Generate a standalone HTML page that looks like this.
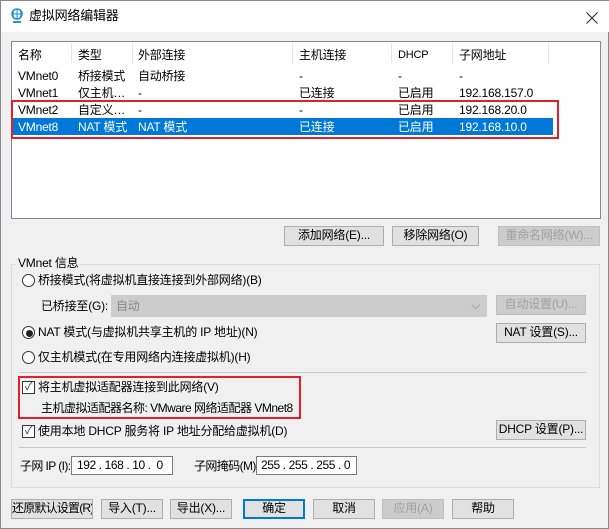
<!DOCTYPE html><html><head><meta charset="utf-8"><style>
*{margin:0;padding:0;box-sizing:border-box}
body{width:609px;height:529px;background:#f0f0f0;font-family:"Liberation Sans","Noto Sans CJK SC",sans-serif;font-size:12px;color:#000;position:relative;overflow:hidden;border:1px solid #888;letter-spacing:-0.2px}
.a{position:absolute;white-space:nowrap;line-height:16px}
.btn{position:absolute;background:#e1e1e1;border:1px solid #adadad;text-align:center;line-height:17px;height:20px;white-space:nowrap;overflow:hidden}
.dis{color:#a0a0a0;background:#ccc;border-color:#bfbfbf}
.rad{position:absolute;width:13px;height:13px;border:1px solid #333;border-radius:50%;background:#fff}
.chk{position:absolute;width:13px;height:13px;border:1px solid #333;background:#fff;font-size:11px;line-height:11px;text-align:center;color:#333}
.inp{position:absolute;background:#fff;border:1px solid #7a7a7a;height:19px;line-height:17px;padding-left:5px;white-space:nowrap;overflow:hidden;letter-spacing:-0.4px}
</style></head><body>
<div class="a" style="left:0;top:0;width:609px;height:31px;background:#fff"></div>
<svg class="a" style="left:9px;top:7px" width="14" height="16"><circle cx="7" cy="6" r="5" fill="none" stroke="#1a8fd6" stroke-width="1.5"/><path d="M2 6h10M7 1v10M4 2q-2 4 0 8M10 2q2 4 0 8" stroke="#1a8fd6" fill="none"/><path d="M3 14h8" stroke="#2a8" stroke-width="2"/></svg>
<div class="a" style="left:28px;top:7px;font-size:13px">虚拟网络编辑器</div>
<svg class="a" style="left:585px;top:11px" width="12" height="12"><path d="M0.5 0.5L11.5 11.5M11.5 0.5L0.5 11.5" stroke="#222" stroke-width="1"/></svg>

<div class="a" style="left:10px;top:40px;width:590px;height:178px;background:#fff;border:1px solid #828790"></div>
<div class="a" style="left:70px;top:42px;width:1px;height:20px;background:#e5e5e5"></div>
<div class="a" style="left:131px;top:42px;width:1px;height:20px;background:#e5e5e5"></div>
<div class="a" style="left:291px;top:42px;width:1px;height:20px;background:#e5e5e5"></div>
<div class="a" style="left:390px;top:42px;width:1px;height:20px;background:#e5e5e5"></div>
<div class="a" style="left:451px;top:42px;width:1px;height:20px;background:#e5e5e5"></div>
<div class="a" style="left:547px;top:42px;width:1px;height:20px;background:#e5e5e5"></div>
<div class="a" style="left:17px;top:46px">名称</div><div class="a" style="left:77px;top:46px">类型</div><div class="a" style="left:137px;top:46px">外部连接</div><div class="a" style="left:298px;top:46px">主机连接</div><div class="a" style="left:397px;top:46px;font-size:11px">DHCP</div><div class="a" style="left:458px;top:46px">子网地址</div>
<div class="a" style="left:17px;top:67px">VMnet0</div><div class="a" style="left:77px;top:67px">桥接模式</div><div class="a" style="left:137px;top:67px">自动桥接</div><div class="a" style="left:298px;top:67px">-</div><div class="a" style="left:397px;top:67px">-</div><div class="a" style="left:458px;top:67px">-</div>
<div class="a" style="left:17px;top:84px">VMnet1</div><div class="a" style="left:77px;top:84px">仅主机…</div><div class="a" style="left:137px;top:84px">-</div><div class="a" style="left:298px;top:84px">已连接</div><div class="a" style="left:397px;top:84px">已启用</div><div class="a" style="left:458px;top:84px">192.168.157.0</div>
<div class="a" style="left:17px;top:101px">VMnet2</div><div class="a" style="left:77px;top:101px">自定义…</div><div class="a" style="left:137px;top:101px">-</div><div class="a" style="left:298px;top:101px">-</div><div class="a" style="left:397px;top:101px">已启用</div><div class="a" style="left:458px;top:101px">192.168.20.0</div>
<div class="a" style="left:11px;top:117px;width:541px;height:17px;background:#0078d7"></div>
<div class="a" style="left:17px;top:118px;color:#fff">VMnet8</div><div class="a" style="left:77px;top:118px;color:#fff">NAT 模式</div><div class="a" style="left:137px;top:118px;color:#fff">NAT 模式</div><div class="a" style="left:298px;top:118px;color:#fff">已连接</div><div class="a" style="left:397px;top:118px;color:#fff">已启用</div><div class="a" style="left:458px;top:118px;color:#fff">192.168.10.0</div>
<div class="a" style="left:10px;top:99px;width:548px;height:39px;border:2px solid #e0202a"></div>

<div class="btn" style="left:283px;top:225px;width:100px">添加网络(E)...</div>
<div class="btn" style="left:391px;top:225px;width:87px">移除网络(O)</div>
<div class="btn dis" style="left:497px;top:225px;width:102px">重命名网络(W)...</div>

<div class="a" style="left:10px;top:263px;width:589px;height:224px;border:1px solid #dcdcdc"></div>
<div class="a" style="left:15px;top:254px;background:#f0f0f0;padding:0 2px">VMnet 信息</div>
<div class="rad" style="left:21px;top:273px"></div><div class="a" style="left:37px;top:271px">桥接模式(将虚拟机直接连接到外部网络)(B)</div>
<div class="a" style="left:40px;top:297px">已桥接至(G):</div>
<div class="a" style="left:110px;top:294px;width:376px;height:22px;background:#ccc;border:1px solid #ccc;color:#888;padding:2px 4px">自动<span style="position:absolute;right:6px;top:1px">⌵</span></div>
<div class="btn dis" style="left:495px;top:294px;width:90px">自动设置(U)...</div>
<div class="rad" style="left:21px;top:325px"></div><div class="a" style="left:25px;top:329px;width:7px;height:7px;border-radius:50%;background:#222"></div>
<div class="a" style="left:37px;top:323px">NAT 模式(与虚拟机共享主机的 IP 地址)(N)</div>
<div class="btn" style="left:495px;top:322px;width:90px">NAT 设置(S)...</div>
<div class="rad" style="left:21px;top:350px"></div><div class="a" style="left:37px;top:348px">仅主机模式(在专用网络内连接虚拟机)(H)</div>
<div class="a" style="left:18px;top:371px;width:567px;height:1px;background:#c8c8c8"></div>
<div class="chk" style="left:21px;top:380px">✓</div><div class="a" style="left:37px;top:378px">将主机虚拟适配器连接到此网络(V)</div>
<div class="a" style="left:40px;top:399px;letter-spacing:-0.5px">主机虚拟适配器名称: VMware 网络适配器 VMnet8</div>
<div class="a" style="left:17px;top:375px;width:283px;height:43px;border:2px solid #e0202a"></div>
<div class="chk" style="left:21px;top:424px">✓</div><div class="a" style="left:37px;top:422px">使用本地 DHCP 服务将 IP 地址分配给虚拟机(D)</div>
<div class="btn" style="left:495px;top:419px;width:90px">DHCP 设置(P)...</div>
<div class="a" style="left:18px;top:446px;width:567px;height:1px;background:#c8c8c8"></div>
<div class="a" style="left:19px;top:457px;letter-spacing:-0.6px">子网 IP (I):</div>
<div class="inp" style="left:70px;top:455px;width:102px">192 . 168 . 10 . &nbsp;0</div>
<div class="a" style="left:193px;top:457px;letter-spacing:-0.6px">子网掩码(M):</div>
<div class="inp" style="left:255px;top:455px;width:101px;padding-left:4px">255 . 255 . 255 . 0</div>

<div class="btn" style="left:10px;top:498px;width:82px;letter-spacing:-0.8px">还原默认设置(R)</div>
<div class="btn" style="left:100px;top:498px;width:62px">导入(T)...</div>
<div class="btn" style="left:169px;top:498px;width:62px">导出(X)...</div>
<div class="btn" style="left:242px;top:498px;width:62px;border:2px solid #0078d7;line-height:15px">确定</div>
<div class="btn" style="left:312px;top:498px;width:62px">取消</div>
<div class="btn dis" style="left:381px;top:498px;width:62px">应用(A)</div>
<div class="btn" style="left:451px;top:498px;width:62px">帮助</div>
</body></html>
